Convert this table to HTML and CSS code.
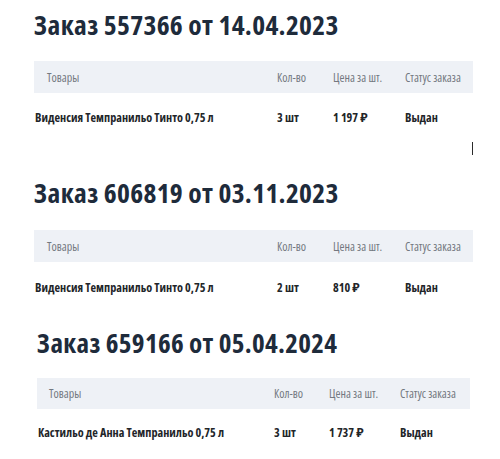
FILE: index.html
```html
<!DOCTYPE html>
<html lang="ru">
<head>
<meta charset="utf-8">
<title>Заказы</title>
<link rel="stylesheet" href="styles.css">
</head>
<body>
<main class="orders">
  <section class="order order--first">
    <h2 class="order__title">Заказ 557366 от 14.04.2023</h2>
    <div class="order__table">
      <div class="order__head">
        <span class="cell cell--name">Товары</span>
        <span class="cell">Кол-во</span>
        <span class="cell">Цена за шт.</span>
        <span class="cell">Статус заказа</span>
      </div>
      <div class="order__row">
        <span class="cell cell--name">Виденсия Темпранильо Тинто 0,75 л</span>
        <span class="cell">3 шт</span>
        <span class="cell">1 197 ₽</span>
        <span class="cell">Выдан</span>
      </div>
    </div>
    <div class="caret-line"><span class="caret"></span></div>
  </section>

  <section class="order order--second">
    <h2 class="order__title">Заказ 606819 от 03.11.2023</h2>
    <div class="order__table">
      <div class="order__head">
        <span class="cell cell--name">Товары</span>
        <span class="cell">Кол-во</span>
        <span class="cell">Цена за шт.</span>
        <span class="cell">Статус заказа</span>
      </div>
      <div class="order__row">
        <span class="cell cell--name">Виденсия Темпранильо Тинто 0,75 л</span>
        <span class="cell">2 шт</span>
        <span class="cell">810 ₽</span>
        <span class="cell">Выдан</span>
      </div>
    </div>
  </section>

  <section class="order order--third">
    <h2 class="order__title">Заказ 659166 от 05.04.2024</h2>
    <div class="order__table">
      <div class="order__head">
        <span class="cell cell--name">Товары</span>
        <span class="cell">Кол-во</span>
        <span class="cell">Цена за шт.</span>
        <span class="cell">Статус заказа</span>
      </div>
      <div class="order__row">
        <span class="cell cell--name">Кастильо де Анна Темпранильо 0,75 л</span>
        <span class="cell">3 шт</span>
        <span class="cell">1 737 ₽</span>
        <span class="cell">Выдан</span>
      </div>
    </div>
  </section>
</main>
</body>
</html>
```
FILE: styles.css
```css
html, body {
  margin: 0;
  padding: 0;
  background: #ffffff;
}

body {
  font-family: "Open Sans", "Noto Sans", sans-serif;
  color: #222529;
}

.orders {
  display: flex;
  flex-direction: column;
  padding-top: 9px;
}

.order {
  display: flex;
  flex-direction: column;
  padding-left: 34px;
  width: 439px;
}

.order__title {
  margin: 0 0 20px;
  font-size: 27.5px;
  line-height: 32px;
  letter-spacing: 0.3px;
  font-weight: 700;
  font-stretch: 75%;
  color: #1e2b3b;
  white-space: nowrap;
}

.order__table {
  display: flex;
  flex-direction: column;
}

.order__head,
.order__row {
  display: grid;
  grid-template-columns: 243px 56px 72px 1fr;
  align-items: center;
}

.order__head {
  height: 32px;
  background: #eef1f6;
  font-size: 12px;
  font-stretch: 75%;
  color: #737880;
}

.order__head .cell--name {
  padding-left: 13px;
}

.order__row {
  height: 48px;
  font-size: 12.2px;
  font-weight: 700;
  font-stretch: 75%;
  color: #222529;
}

.order__row .cell--name {
  padding-left: 1px;
}

.cell {
  white-space: nowrap;
}

.caret-line {
  display: flex;
  justify-content: flex-end;
  height: 36px;
  padding-top: 1px;
  box-sizing: border-box;
}

.caret {
  width: 1px;
  height: 13px;
  background: #2b2b2b;
}

.order--second .order__title {
  margin-bottom: 21px;
}

.order--second .order__row {
  height: 50px;
}

.order--third {
  margin-top: 15px;
  padding-left: 37px;
  width: 433px;
}

.order--third .order__title {
  font-size: 27.1px;
  margin-bottom: 19px;
}

.order--third .order__head,
.order--third .order__row {
  grid-template-columns: 237px 55px 71px 1fr;
}

.order--third .order__head {
  height: 31px;
}

.order--third .order__row {
  height: 46px;
}

.order--third .order__head .cell--name {
  padding-left: 12px;
}
```
